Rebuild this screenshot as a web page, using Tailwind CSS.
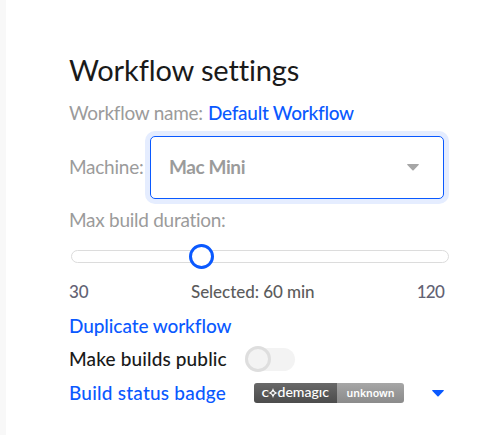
<!DOCTYPE html>
<html lang="en">
<head>
<meta charset="utf-8">
<title>Workflow settings</title>
<script src="https://cdn.jsdelivr.net/npm/@tailwindcss/browser@4"></script>
</head>
<body class="flex h-[435px] w-[503px] overflow-hidden bg-[#f8f8f8] pl-1.5 font-['Lato',sans-serif] whitespace-nowrap">
<main class="flex h-full w-full flex-col bg-white pl-[63px] pt-[52px] text-[19px] text-[#1a1a1a]">
  <h1 class="flex h-9 items-center text-[29px] tracking-[-0.12px]"><span>Workflow settings</span></h1>
  <div class="mt-[13px] flex h-6 items-center tracking-[-0.27px]">
    <span class="w-[139px] text-[#9b9b9b]">Workflow name:</span>
    <a class="font-medium text-[#0a59ff]">Default Workflow</a>
  </div>
  <div class="mt-[11px] flex h-[63px] items-center">
    <label class="w-[81px] tracking-[-0.25px] text-[#9b9b9b]">Machine:</label>
    <div class="flex h-[63px] w-[294px] items-center justify-between rounded-[5px] border border-[#0a59ff] bg-white pr-6 pl-[18px] font-bold tracking-[-0.4px] text-[#9b9b9b] ring-5 ring-[#e5edff]">
      <span>Mac Mini</span>
      <svg class="h-2 w-3" viewBox="0 0 12 8"><path d="M.7 0h10.6q1.1 0 .3.9L6.6 6.2q-.6.7-1.2 0L.4.9Q-.3 0 .7 0Z" fill="#a6a6a6"/></svg>
    </div>
  </div>
  <div class="mt-[9px] flex h-6 items-center tracking-[-0.27px] text-[#9b9b9b]"><span>Max build duration:</span></div>
  <div class="mt-3 ml-0.5 flex h-[25px] w-[378px] items-center">
    <div class="flex h-[13px] w-full items-center rounded-full border border-[#dcdcdc] bg-white pl-[117px]">
      <div class="size-[25px] shrink-0 rounded-full border-3 border-[#0a59ff] bg-white"></div>
    </div>
  </div>
  <div class="mt-[11px] flex h-6 w-[375px] items-center text-[17px] font-medium text-[#626273]">
    <span class="w-[122px]">30</span>
    <span class="tracking-[-0.05px] text-[#5c5c5c]">Selected: 60 min</span>
    <span class="ml-auto tracking-[-0.8px]">120</span>
  </div>
  <a class="mt-2.5 flex h-6 items-center font-medium tracking-[-0.08px] text-[#0a59ff]"><span>Duplicate workflow</span></a>
  <div class="mt-[9px] flex h-6 items-center">
    <span class="w-[176px] font-medium tracking-[0.13px]">Make builds public</span>
    <div class="flex h-[23px] w-[50px] items-center rounded-full bg-[#f3f3f3]">
      <div class="size-[26px] shrink-0 rounded-full border-3 border-[#dedede] bg-[#f3f3f3]"></div>
    </div>
  </div>
  <div class="mt-2.5 flex h-6 items-center">
    <a class="w-[185px] font-medium tracking-[0.22px] text-[#0a59ff]">Build status badge</a>
    <svg class="h-5 w-[150px]" viewBox="0 0 150 20">
      <defs>
        <linearGradient id="shade" x2="0" y2="1"><stop stop-color="#fff" stop-opacity=".12"/><stop offset="1" stop-opacity=".1"/></linearGradient>
        <clipPath id="badge"><rect width="150" height="20" rx="3"/></clipPath>
      </defs>
      <g clip-path="url(#badge)"><path d="M0 0h83v20H0z" fill="#555"/><path d="M83 0h67v20H83z" fill="#9b9b9b"/><path d="M0 0h150v20H0z" fill="url(#shade)"/></g>
      <g fill="#fff" font-family="Lato, sans-serif" font-size="13" font-weight="500">
        <text x="7.500" y="13.500" textLength="7.500" lengthAdjust="spacingAndGlyphs">c</text>
        <text x="23.500" y="13.500" textLength="51.500" lengthAdjust="spacingAndGlyphs">demagıc</text>
      </g>
      <path d="M19 7Q19.800 9.200 22 10 19.800 10.800 19 13 18.200 10.800 16 10 18.200 9.200 19 7Z" fill="none" stroke="#fff" stroke-width="1.300"/>
      <text x="92.500" y="14" textLength="48" lengthAdjust="spacingAndGlyphs" fill="#fff" font-family="Noto Sans, sans-serif" font-weight="600" font-size="10.500">unknown</text>
    </svg>
    <svg class="ml-7 h-2 w-3" viewBox="0 0 12 8"><path d="M.7 1h10.6q1.100 0 .3.900L6.600 7.200q-.6.700-1.200 0L.4 1.900Q-.3 1 .7 1Z" fill="#0a59ff"/></svg>
  </div>
</main>
</body>
</html>
